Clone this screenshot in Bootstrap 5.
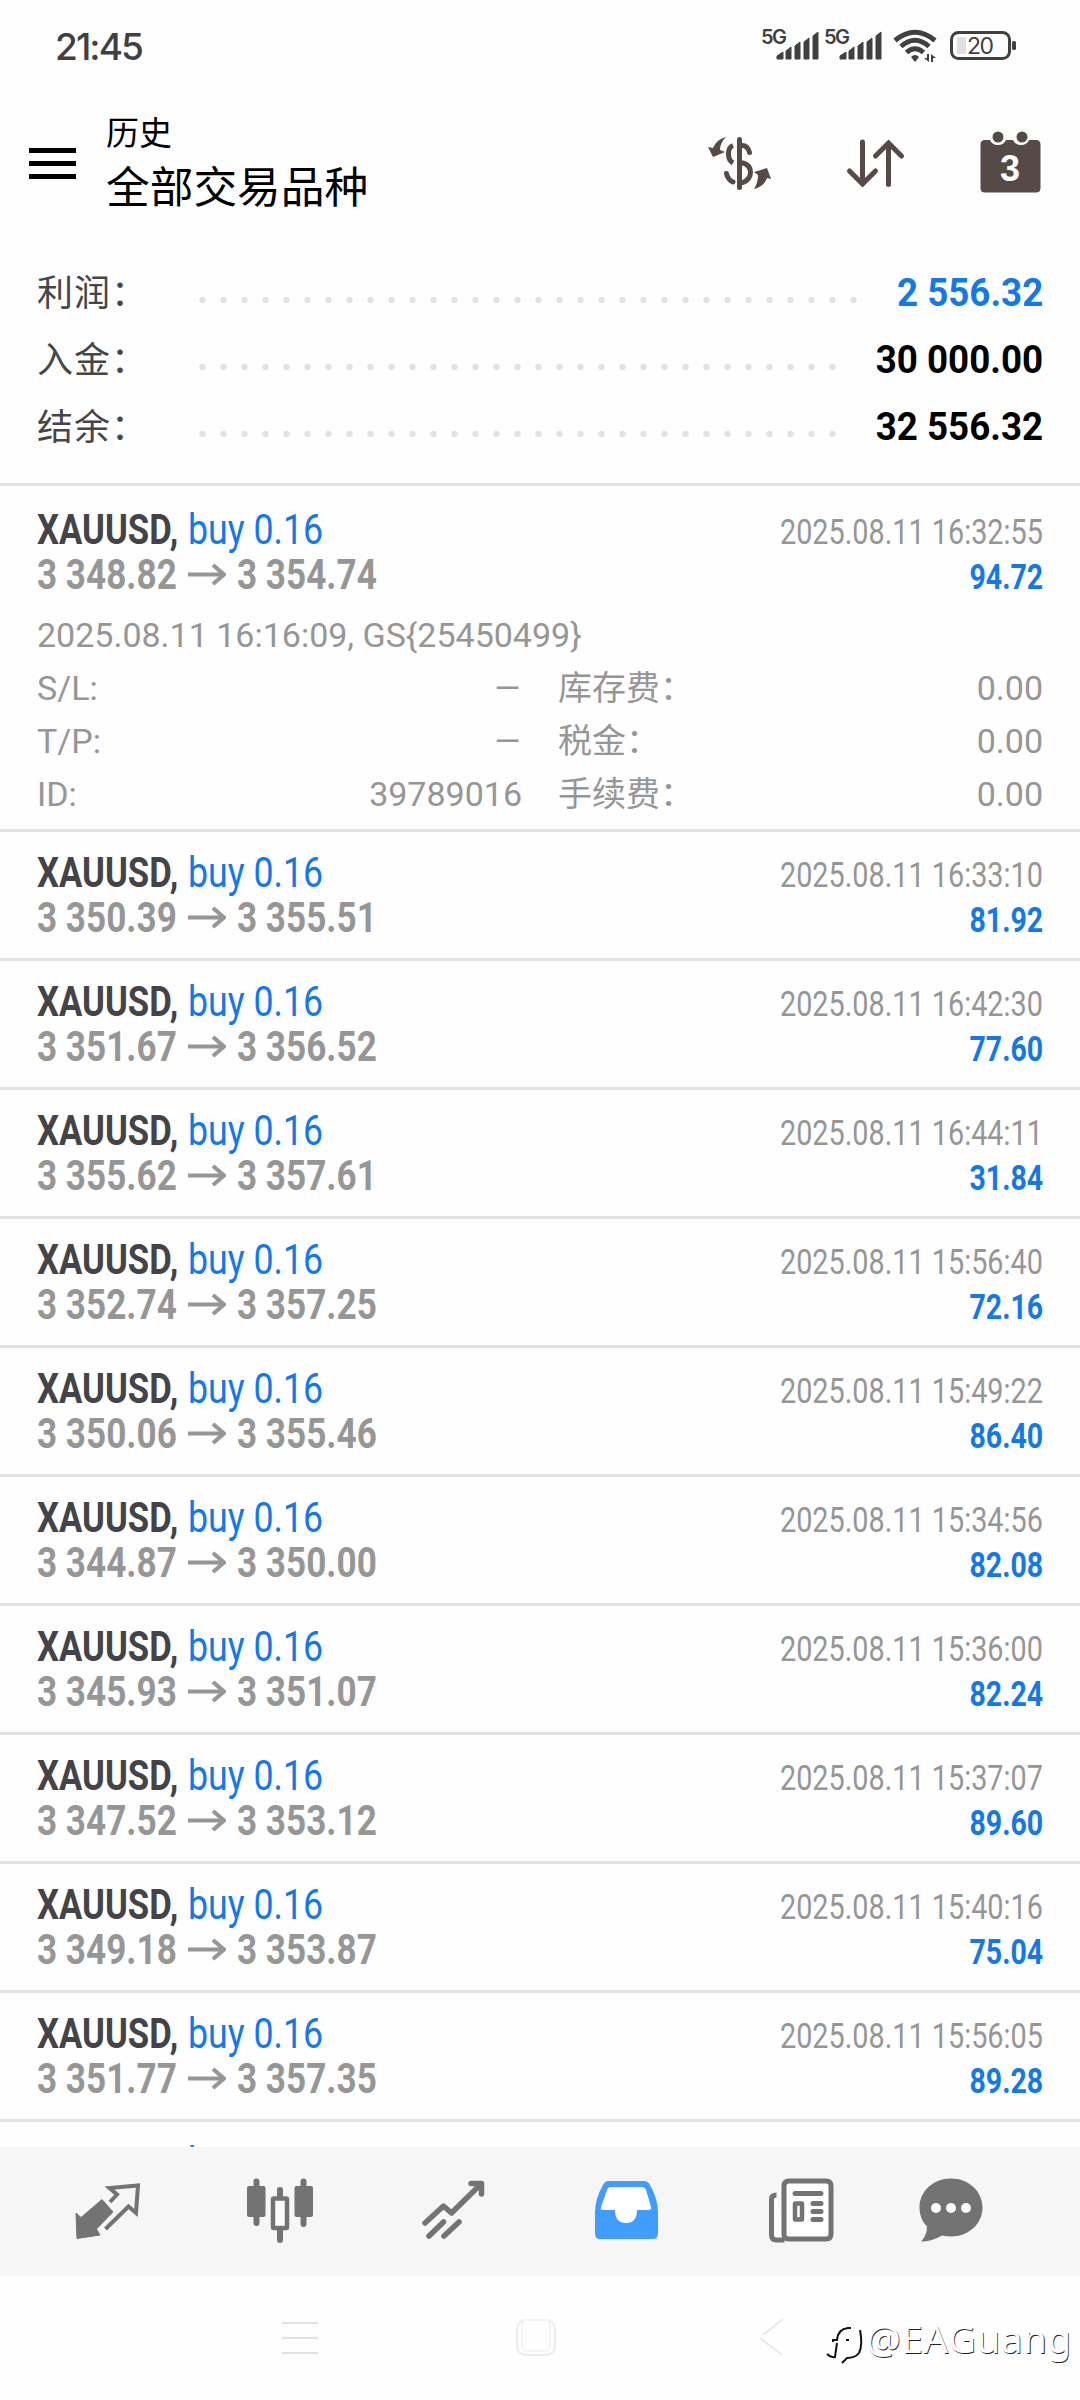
<!DOCTYPE html>
<html lang="zh-CN">
<head>
<meta charset="utf-8">
<meta name="viewport" content="width=device-width, initial-scale=1">
<title>历史</title>
<link href="https://cdn.jsdelivr.net/npm/bootstrap@5.3.0/dist/css/bootstrap.min.css" rel="stylesheet">
<style>
body{width:1080px;height:2400px;overflow:hidden;background:#fefefe;font-family:Roboto,"Noto Sans CJK SC",sans-serif;color:#000}
svg{display:block;flex:none}
.screen{height:2400px}
.status{height:96px;padding:0 64px 0 55px;color:#404040}
.clock{font:500 37px/1 Inter,sans-serif;letter-spacing:-1.9px;padding-top:28px}
.status svg{margin-top:20px}
.topbar{height:142px;padding:0 36px 0 29px}
.burger{width:47px;padding-top:52px;gap:8px}
.burger i{height:5px;background:#000}
.titles{margin-left:30px;padding-top:17px}
.t1{font-size:33px;line-height:42px}
.t2{font-size:43.7px;line-height:66px}
.sums{padding:21px 37px 0 37px;height:245px}
.sumrow{height:67px}
.sumrow .lbl{width:155px;font-size:36px;line-height:67px;padding-top:3px;letter-spacing:1px;color:#464648;white-space:nowrap}
.leader{height:8px;margin-top:15px;background:radial-gradient(circle at 10.5px 4px,#e2e2e2 2.9px,transparent 3.5px) 0 0/21px 8px repeat-x}
.amt{font-size:38px;font-weight:700;line-height:67px;padding-top:1px;transform:scaleX(.967);transform-origin:100% 50%}
.blue{color:#1478e6}
.deals{height:1664px;overflow:hidden;border-top:3px solid #e3e3e3}
.deal{height:129px;padding:18px 37px 0;border-bottom:3px solid #e3e3e3}
.deal.open{height:346px;padding-top:21px}
.ln{height:45px;line-height:45px}
.nar{display:inline-block;transform-origin:0 50%;white-space:pre;font-size:42px}
.narr{display:inline-block;transform-origin:100% 50%;white-space:pre;font-size:34.5px;line-height:51px}
.sym{font-weight:700;color:#444448;width:151px;transform:scaleX(.826)}
.side{transform:scaleX(.85)}
.px{font-weight:700;color:#969696;transform:scaleX(.836)}
.p1{width:151px}
.arr{margin:8px 11px 0 0}
.when{color:#969696;transform:scaleX(.835)}
.gain{font-weight:700;transform:scaleX(.826)}
.more{color:#969696;font-size:34px;line-height:53px;padding-top:12px}
.more .l,.more .r{width:485px}
.dash{display:inline-block;transform:scaleX(1.3);transform-origin:100% 50%}
.tabs{height:129px;background:#f6f6f6}
.sys{height:124px}
</style>
</head>
<body>
<div class="screen d-flex flex-column">
  <div class="status d-flex justify-content-between align-items-start">
    <div class="clock">21:45</div>
    <svg width="256" height="50" viewBox="760 20 256 50" fill="#404040">
      <g font-family="Inter" font-weight="600" font-size="20"><text x="761" y="44" textLength="26">5G</text><text x="824" y="44" textLength="26">5G</text></g>
      <g id="bars"><path d="M777 59v-3l6-4v7zM786 59v-8l5-4v12zM795 59v-13l5-4v17zM804 59v-17l5-4v21zM813 59v-23l5-4v27z" stroke="#404040" stroke-width="1" stroke-linejoin="round"/></g>
      <use href="#bars" x="63"/>
      <g fill="none" stroke="#404040" stroke-width="5"><path d="M895 40.500Q915 24 935 40.500"/><path d="M901 46.500Q915 34 929 46.500"/><path d="M906.500 52.500Q915 45 923.500 52.500"/></g>
      <path d="M911 57q4-4 8 0l-4 5z"/>
      <path d="M929 54v8l-5-4h3v-4zM931 62v-8l5 4h-3v4z"/>
      <rect x="951.500" y="32.500" width="58" height="26" rx="7" fill="none" stroke="#404040" stroke-width="3"/>
      <rect x="957" y="37" width="9" height="17" rx="1" fill="#e0e0e0"/>
      <rect x="1012" y="41" width="4" height="9" rx="1.500"/>
      <text x="967" y="54" font-family="Inter" font-size="23" textLength="27">20</text>
    </svg>
  </div>

  <div class="topbar d-flex">
    <div class="burger d-flex flex-column"><i></i><i></i><i></i></div>
    <div class="titles flex-grow-1"><div class="t1">历史</div><div class="t2">全部交易品种</div></div>
    <svg width="340" height="80" viewBox="704 120 340 80" class="mt-4" fill="#554a47">
      <g fill="none" stroke="#554a47" stroke-width="5" stroke-linecap="round">
        <path d="M739.500 139.500V187.500"/>
        <path d="M733 145.500c-6 2-6 14 0 17.500" stroke-linecap="butt"/><path d="M742 145.500c4 0 6.500 3 7.500 7M726.500 173.500c.5 4 4 8 6.500 8.500M743 163c10 3 10 15 0 19.500"/>
        <path d="M862.500 142V184M849.500 171L862.500 184L875.500 171M888.500 184.500V143M875.500 156L888.500 143L901.500 156"/>
      </g>
      <path d="M726 137c-8 2-11 7-13 11l-5-1 5 10 12-5-5-2c0-5 2-9 6-13zM754 189c8-2 11-6 13-11l4 1-4-11-13 4 4 3c0 5-1 9-4 14z"/>
      <path d="M985 140h5q2 5 8 5t8-5h7q2 5 8 5t8-5h7q4.500 0 4.500 4.500v43.500q0 4.500-4.500 4.500h-51q-4.500 0-4.500-4.500v-43.500q0-4.500 4.500-4.500z"/>
      <circle cx="998" cy="137" r="5.500"/><circle cx="1022" cy="137" r="5.500"/>
      <text x="1010" y="181" text-anchor="middle" font-family="Liberation Sans" font-size="36" font-weight="700" fill="#fff">3</text>
    </svg>
  </div>

  <div class="sums">
    <div class="sumrow d-flex align-items-center"><div class="lbl">利润：</div><div class="leader" style="width:672px"></div><div class="amt blue ms-auto">2 556.32</div></div>
    <div class="sumrow d-flex align-items-center"><div class="lbl">入金：</div><div class="leader" style="width:651px"></div><div class="amt ms-auto">30 000.00</div></div>
    <div class="sumrow d-flex align-items-center"><div class="lbl">结余：</div><div class="leader" style="width:651px"></div><div class="amt ms-auto">32 556.32</div></div>
  </div>

  <div class="deals" id="deals"></div>

  <nav class="tabs">
    <svg width="1080" height="129" viewBox="0 2147 1080 129" fill="#737373">
      <path d="M102 2199.500L113 2212L96.500 2229L100 2235L77 2238.500L76 2213L81 2217.500z" stroke="#737373" stroke-linejoin="round"/>
      <path d="M110 2202L117 2194.500L109.500 2188L138 2185.500L136 2213L128.500 2206.500L105.500 2229" fill="none" stroke="#737373" stroke-width="4"/>
      <g><rect x="247" y="2186" width="18.500" height="31" rx="2"/><rect x="294.500" y="2186" width="18.500" height="31" rx="2"/></g>
      <rect x="273" y="2198.500" width="14" height="29.500" rx="1" fill="#fff" stroke="#737373" stroke-width="4.500"/>
      <path d="M256.500 2181.500V2223M303.500 2181.500V2224M280 2190V2197M280 2229V2240" stroke="#737373" stroke-width="6" stroke-linecap="round"/>
      <g fill="none" stroke="#737373" stroke-width="5.500" stroke-linecap="round" stroke-linejoin="round"><path d="M425 2223L443.500 2206L451.500 2213L481 2184"/><path d="M471 2183.500H481.500V2194M429 2236L443.500 2222M444 2236L459 2222"/></g>
      <path d="M608 2181H644q4 0 6 4q8 14 8 27v21q0 6-5 6H600q-5 0-5-6v-21q0-13 8-27q2-4 5-4z" fill="#419cfd"/>
      <path d="M610 2187H642q3 0 4 3l5 17q1 3-3 3H637q0 13-11 13t-11-13H603q-3 0-2-3l6-17q1-3 3-3z" fill="#fff"/>
      <path d="M776.500 2195q-5 0-5 4V2235q0 5 5 5h8M784 2186q0-5 5-5H826q5 0 5 5V2234q0 5-5 5H789q-5 0-5-5z" fill="#fff" stroke="#737373" stroke-width="5"/>
      <path d="M795 2193.500H821M813 2203.500H821M813 2211.500H821M813 2219.500H821" stroke="#737373" stroke-width="5" stroke-linecap="round"/>
      <rect x="795" y="2203.500" width="7" height="16" fill="#fff" stroke="#737373" stroke-width="4.500" stroke-linejoin="round"/>
      <path d="M951 2178.500c18 0 31.500 13 31.500 29s-13.500 29-31.500 29q-5 0-9-1q-10 6-21 6q6-6 6-15c-5-5-7.500-12-7.500-19c0-16 13.500-29 31.500-29z"/>
      <g fill="#fff"><circle cx="936" cy="2208" r="5"/><circle cx="951" cy="2208" r="5"/><circle cx="966" cy="2208" r="5"/></g>
    </svg>
  </nav>

  <div class="sys">
    <svg width="1080" height="124" viewBox="0 2276 1080 124" fill="none" stroke="#e2e2e2" stroke-width="2">
      <path d="M282 2323H318M282 2338H318M282 2353H318"/>
      <rect x="517" y="2320" width="38" height="35" rx="9" stroke="#ebebeb"/><rect x="522" y="2320" width="28" height="31" rx="4" stroke="#f4f4f4"/>
      <path d="M783 2319L763 2335M760 2338L782 2355" stroke="#e8e8e8"/>
      <path d="M833 2342V2340H837Q838 2329 848 2328H851M860 2330Q863 2345 859 2353Q855 2358 847 2358L842 2363M827 2354Q831 2358 835 2357L837 2343M846 2340H849" stroke="#111"/>
      <g font-family="Noto Sans" font-size="38.500" stroke="none"><text x="867" y="2354" textLength="205" fill="#222">@EAGuang</text><text x="866.200" y="2353.200" textLength="205" fill="#fefefe">@EAGuang</text></g>
    </svg>
  </div>
</div>
<script src="https://cdn.jsdelivr.net/npm/bootstrap@5.3.0/dist/js/bootstrap.bundle.min.js"></script>
<script>
const rows=[["3 348.82","3 354.74","16:32:55","94.72"],["3 350.39","3 355.51","16:33:10","81.92"],["3 351.67","3 356.52","16:42:30","77.60"],["3 355.62","3 357.61","16:44:11","31.84"],["3 352.74","3 357.25","15:56:40","72.16"],["3 350.06","3 355.46","15:49:22","86.40"],["3 344.87","3 350.00","15:34:56","82.08"],["3 345.93","3 351.07","15:36:00","82.24"],["3 347.52","3 353.12","15:37:07","89.60"],["3 349.18","3 353.87","15:40:16","75.04"],["3 351.77","3 357.35","15:56:05","89.28"],["","","",""]];
const more=`<div class="more"><div>2025.08.11 16:16:09, GS{25450499}</div>
${[["S/L:","–","库存费："],["T/P:","–","税金："],["ID:","39789016","手续费："]].map(m=>`<div class="d-flex justify-content-between"><div class="l d-flex justify-content-between"><span>${m[0]}</span><span class="${m[1]==="–"?"dash":""}">${m[1]}</span></div><div class="r d-flex justify-content-between"><span>${m[2]}</span><span>0.00</span></div></div>`).join("")}</div>`;
document.getElementById("deals").innerHTML=rows.map((r,i)=>`<div class="deal${i?"":" open"}">
<div class="ln d-flex justify-content-between"><div class="d-flex"><span class="nar sym">XAUUSD,</span><span class="nar side blue">buy 0.16</span></div>${r[2]?`<span class="narr when">2025.08.11 ${r[2]}</span>`:""}</div>
${r[0]?`<div class="ln d-flex justify-content-between"><div class="d-flex"><span class="nar px p1">${r[0]}</span><svg class="arr" width="38" height="30" viewBox="0 0 38 30" fill="none" stroke="#969696" stroke-width="4"><path d="M0 14.500H35M25 5L36 14.500L25 24"/></svg><span class="nar px">${r[1]}</span></div><span class="narr gain blue">${r[3]}</span></div>`:""}${i?"":more}</div>`).join("");
</script>
</body>
</html>
